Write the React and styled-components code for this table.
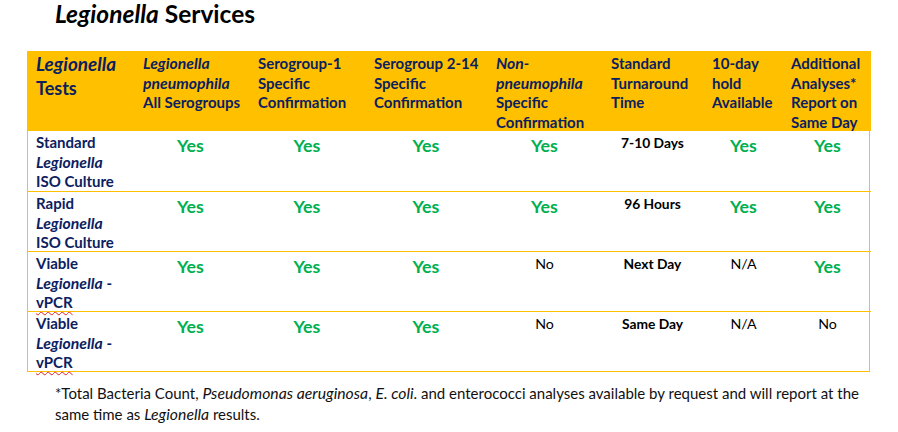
import React from "react";
import styled, { createGlobalStyle } from "styled-components";

const Global = createGlobalStyle`
  html, body { margin: 0; padding: 0; background: #ffffff; }
  body { font-family: Lato, "Open Sans", "Liberation Sans", sans-serif; }
`;

const Page = styled.div`
  width: 898px;
  height: 432px;
  padding: 0 0 0 27px;
  box-sizing: border-box;
  overflow: hidden;
`;

const Title = styled.h1`
  margin: 0;
  padding: 0 0 0 28px;
  height: 51px;
  box-sizing: border-box;
  font-size: 24.5px;
  line-height: 28px;
  font-weight: 700;
  color: #000;
`;

const Em = styled.i`
  font-style: italic;
  font-size: 1.05em;
  line-height: 0;
`;

const Table = styled.div`
  width: 843px;
  display: grid;
  grid-template-columns: 108px 115px 116px 122px 115px 101px 79px 87px;
  border: 1px solid #ffc000;
  border-top: 0;
  box-sizing: border-box;
`;

const HeadCell = styled.div`
  background: #ffc000;
  height: 80px;
  box-sizing: border-box;
  padding: ${(p) => (p.$first ? "1px 0 0 8px" : "3px 0 0 7px")};
  color: #0b2060;
  font-weight: 700;
  font-size: ${(p) => (p.$first ? "18px" : "15px")};
  line-height: ${(p) => (p.$first ? "24px" : "19.5px")};
`;

const Cell = styled.div`
  height: 60px;
  box-sizing: border-box;
  border-top: ${(p) => (p.$firstRow ? "0" : "1px solid #ffc000")};
  padding: ${(p) => (p.$label ? "2px 0 0 8px" : "2px 0 0 0")};
  text-align: ${(p) => (p.$label ? "left" : "center")};
  color: ${(p) => (p.$label ? "#0b2060" : "#000")};
  font-size: 15px;
  line-height: 19.5px;
  font-weight: ${(p) => (p.$label ? 700 : 400)};
`;

const Line = styled.span`
  display: block;
  white-space: nowrap;
`;

const Yes = styled.span`
  display: inline-block;
  color: #00b050;
  font-weight: 700;
  font-size: 17.8px;
  line-height: 23px;
  padding-top: 1px;
  margin-left: ${(p) => p.$shift || "0"}px;
`;

const Plain = styled.span`
  display: inline-block;
  font-weight: ${(p) => (p.$bold ? 700 : 400)};
  font-size: ${(p) => (p.$bold ? "13.8px" : "14.2px")};
  line-height: 20px;
  margin-left: ${(p) => p.$shift || "0"}px;
`;

const Spell = styled.span`
  text-decoration: underline wavy #e02020;
  text-decoration-thickness: 1px;
  text-underline-offset: 3px;
`;

const Note = styled.p`
  margin: 0;
  padding: 11px 0 0 28px;
  font-size: 15px;
  line-height: 21px;
  color: #111;
  white-space: nowrap;
`;

const headers = [
  [<Em key="a">Legionella</Em>, "Tests"],
  [<Em key="a">Legionella</Em>, <Em key="b">pneumophila</Em>, "All Serogroups"],
  ["Serogroup-1", "Specific", "Confirmation"],
  ["Serogroup 2-14", "Specific", "Confirmation"],
  [<Em key="a">Non-</Em>, <Em key="b">pneumophila</Em>, "Specific", "Confirmation"],
  ["Standard", "Turnaround", "Time"],
  ["10-day", "hold", "Available"],
  ["Additional", "Analyses*", "Report on", "Same Day"],
];

const labels = [
  ["Standard", <Em key="i">Legionella</Em>, "ISO Culture"],
  ["Rapid", <Em key="i">Legionella</Em>, "ISO Culture"],
  ["Viable", <><Em>Legionella</Em> -</>, <Spell>vPCR</Spell>],
  ["Viable", <><Em>Legionella</Em> -</>, <Spell>vPCR</Spell>],
];

const Y = { t: "yes" };
const rows = [
  [Y, Y, Y, Y, { b: "7-10 Days" }, Y, Y],
  [Y, Y, Y, Y, { b: "96 Hours" }, Y, Y],
  [Y, Y, Y, { n: "No" }, { b: "Next Day" }, { n: "N/A" }, Y],
  [Y, Y, Y, { n: "No" }, { b: "Same Day" }, { n: "N/A" }, { n: "No" }],
];

const shifts = [-6, -4, -4, -4, -4, -2, 0];

function Value({ v, shift }) {
  if (v.t === "yes") return <Yes $shift={shift}>Yes</Yes>;
  if (v.b) return <Plain $bold $shift={shift}>{v.b}</Plain>;
  return <Plain $shift={shift}>{v.n}</Plain>;
}

export default function App() {
  return (
    <Page>
      <Global />
      <Title>
        <i>Legionella</i> Services
      </Title>
      <Table>
        {headers.map((h, i) => (
          <HeadCell key={i} $first={i === 0}>
            {h.map((l, j) => (
              <Line key={j}>{l}</Line>
            ))}
          </HeadCell>
        ))}
        {rows.map((r, ri) => (
          <React.Fragment key={ri}>
            <Cell $label $firstRow={ri === 0}>
              {labels[ri].map((l, j) => (
                <Line key={j}>{l}</Line>
              ))}
            </Cell>
            {r.map((v, ci) => (
              <Cell key={ci} $firstRow={ri === 0}>
                <Value v={v} shift={shifts[ci]} />
              </Cell>
            ))}
          </React.Fragment>
        ))}
      </Table>
      <Note>
        *Total Bacteria Count, <Em>Pseudomonas aeruginosa</Em>, <Em>E. coli</Em>. and enterococci analyses available by request and will report at the
        <br />
        same time as <Em>Legionella</Em> results.
      </Note>
    </Page>
  );
}
